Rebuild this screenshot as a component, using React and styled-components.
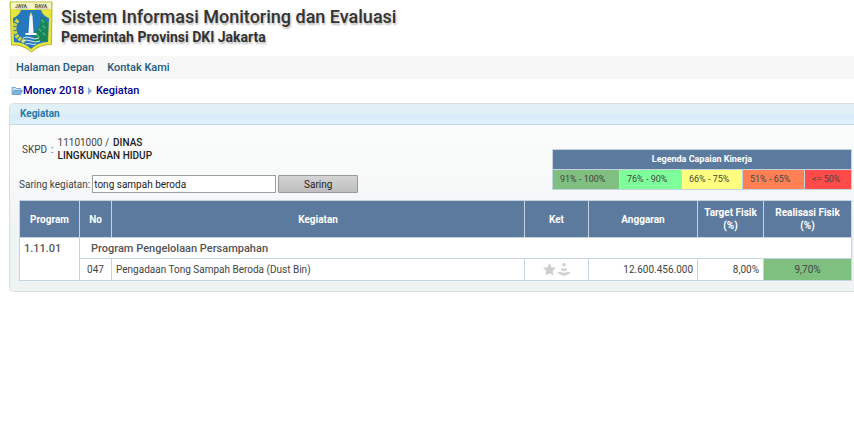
import React, { useState } from "react";
import styled, { createGlobalStyle } from "styled-components";

const legend = [
  { label: "91% - 100%", color: "#7fbf7f", width: 67 },
  { label: "76% - 90%", color: "#7fff99", width: 62 },
  { label: "66% - 75%", color: "#ffff7f", width: 61 },
  { label: "51% - 65%", color: "#ff8055", width: 62 },
  { label: "<= 50%", color: "#ff4a4a", width: 47 },
];

function Logo() {
  return (
    <svg width="44" height="52" viewBox="0 0 44 52" role="img" aria-label="Jaya Raya">
      <path d="M1 1H43L42.500 43.500Q31 43 22.500 51Q13 43 2.500 44Z" fill="#e6e63c" stroke="#b3b62c" />
      <path d="M2 1.500H42V8H2Z" fill="#f3f3d0" />
      <text x="12" y="7" textAnchor="middle" fontSize="5" fontWeight="bold" fill="#5d6038">
        JAYA
      </text>
      <text x="32" y="7" textAnchor="middle" fontSize="5" fontWeight="bold" fill="#5d6038">
        RAYA
      </text>
      <path d="M4 17Q10 15 12 9H32Q34 15 40 17L39 41Q29 41 22 48Q15 41 5 41Z" fill="#2678bd" />
      <path d="M32 15Q39 18 39 28L38 40Q29 40 24 43L26 31Q32 25 32 15Z" fill="#168557" />
      <path d="M9 19Q4 24 6 31Q8 38 17 41" fill="none" stroke="#cfd642" strokeWidth="4" strokeDasharray="3 1" />
      <path d="M33 19l2 3M34 25l2 2M30 28l2 2M34 32l2 2M28 34l2 2" stroke="#6cc5a0" strokeWidth="2" strokeDasharray="1 1" />
      <path d="M20.500 15h3l1 17h3v2h-11v-2h3Z" fill="#f4f6fa" />
      <path d="M20.500 15l1.500-4 1.500 4Z" fill="#e9dfa0" />
      <path d="M14 37q4-2 8 0t8 0M13 40q5-2 9 0t9 0M17 43q3-1 5 0t5 0" fill="none" stroke="#e1edf5" strokeWidth="1" />
    </svg>
  );
}

function FolderIcon() {
  return (
    <svg width="12" height="10" viewBox="0 0 12 10" aria-hidden="true">
      <path d="M1 7.500V1.500h3.500l1 1h4V4" fill="#c6dff2" stroke="#76a9d1" />
      <path d="M3 4.500h8.500L9.500 8.500H1Z" fill="#7fb2da" stroke="#6fa5d0" />
    </svg>
  );
}

function ArrowIcon() {
  return (
    <svg width="4" height="8" viewBox="0 0 4 8" aria-hidden="true">
      <path d="M0 0l4 4-4 4Z" fill="#7db1da" />
    </svg>
  );
}

function StarIcon() {
  return (
    <svg width="13" height="13" viewBox="0 0 13 13" aria-hidden="true">
      <path d="M6.5 0l2 4.2 4.5.6-3.3 3.1.8 4.6-4-2.2-4 2.2.8-4.6L0 4.8l4.5-.6Z" fill="#cfcfcf" />
    </svg>
  );
}

function ConeIcon() {
  return (
    <svg width="14" height="13" viewBox="0 0 14 13" aria-hidden="true">
      <path d="M6 0h2l1 3H5Z M4.5 5q2.5 1.500 5 0l.7 2q-3.200 2-6.400 0Z M3 8.500q4 2.500 8 0l3 1.500-7 3-7-3Z" fill="#cfcfcf" />
    </svg>
  );
}

function App() {
  const [keyword, setKeyword] = useState("tong sampah beroda");

  return (
    <>
      <GlobalStyle />
      <Header>
        <Logo />
        <div>
          <Title>Sistem Informasi Monitoring dan Evaluasi</Title>
          <SubTitle>Pemerintah Provinsi DKI Jakarta</SubTitle>
        </div>
      </Header>
      <Nav>
        <a href="#depan">Halaman Depan</a>
        <a href="#kontak">Kontak Kami</a>
      </Nav>
      <Breadcrumb>
        <a href="#monev">
          <FolderIcon />
          Monev 2018
        </a>
        <ArrowIcon />
        <a href="#kegiatan">Kegiatan</a>
      </Breadcrumb>

      <Panel>
        <PanelTitle>Kegiatan</PanelTitle>
        <PanelBody>
          <Tools>
            <div>
              <Skpd>
                <span>SKPD</span>
                <span>:</span>
                <div>
                  <SkpdLine>
                    <span>11101000 /</span>
                    <b>DINAS</b>
                  </SkpdLine>
                  <SkpdLine>
                    <b>LINGKUNGAN HIDUP</b>
                  </SkpdLine>
                </div>
              </Skpd>
              <Filter onSubmit={(e) => e.preventDefault()}>
                <label htmlFor="keyword">Saring kegiatan:</label>
                <Input
                  id="keyword"
                  value={keyword}
                  onChange={(e) => setKeyword(e.target.value)}
                />
                <Button type="submit">Saring</Button>
              </Filter>
            </div>
            <Legend>
              <colgroup>
                {legend.map((item) => (
                  <Col key={item.label} $width={item.width} />
                ))}
              </colgroup>
              <thead>
                <tr>
                  <th colSpan={5}>Legenda Capaian Kinerja</th>
                </tr>
              </thead>
              <tbody>
                <tr>
                  {legend.map((item) => (
                    <LegendCell key={item.label} $color={item.color}>
                      {item.label}
                    </LegendCell>
                  ))}
                </tr>
              </tbody>
            </Legend>
          </Tools>

          <Table>
            <colgroup>
              <Col $width={60} />
              <Col $width={32} />
              <Col />
              <Col $width={64} />
              <Col $width={109} />
              <Col $width={66} />
              <Col $width={88} />
            </colgroup>
            <thead>
              <tr>
                <th>Program</th>
                <th>No</th>
                <th>Kegiatan</th>
                <th>Ket</th>
                <th>Anggaran</th>
                <th>Target Fisik (%)</th>
                <th>Realisasi Fisik (%)</th>
              </tr>
            </thead>
            <tbody>
              <tr>
                <ProgramCell rowSpan={2}>1.11.01</ProgramCell>
                <ProgramName colSpan={6}>Program Pengelolaan Persampahan</ProgramName>
              </tr>
              <tr>
                <Cell $align="center">047</Cell>
                <Cell>Pengadaan Tong Sampah Beroda (Dust Bin)</Cell>
                <Cell>
                  <Icons>
                    <StarIcon />
                    <ConeIcon />
                  </Icons>
                </Cell>
                <Cell $align="right">12.600.456.000</Cell>
                <Cell $align="right">8,00%</Cell>
                <Cell $align="center" $color="#7fbf7f">
                  9,70%
                </Cell>
              </tr>
            </tbody>
          </Table>
        </PanelBody>
      </Panel>
    </>
  );
}

const GlobalStyle = createGlobalStyle`
  * {
    box-sizing: border-box;
  }

  body {
    margin: 0 0 0 9px;
    background: #fff;
    color: #444;
    font-family: Roboto, "Liberation Sans", sans-serif;
    font-size: 10px;
    line-height: 13px;
  }

  a {
    text-decoration: none;
  }

  svg {
    display: block;
    flex: none;
  }
`;

const Header = styled.header`
  display: flex;
  gap: 8px;
  height: 56px;
  padding-top: 1px;
  color: #333;
  text-shadow: 1px 2px 2px #bbb;
`;

const Title = styled.h1`
  margin: 5px 0 0;
  font-size: 18px;
  line-height: 22px;
  font-weight: 500;
`;

const SubTitle = styled.h2`
  margin: 0;
  font-size: 14px;
  line-height: 18px;
  font-weight: 700;
`;

const Nav = styled.nav`
  display: flex;
  align-items: center;
  gap: 13px;
  height: 23px;
  padding-left: 7px;
  background: #f7f7f7;
  font-size: 11px;

  a {
    color: #215b80;
    font-weight: 500;
  }
`;

const Breadcrumb = styled.div`
  display: flex;
  align-items: center;
  gap: 4px;
  height: 24px;
  padding: 0 0 1px 2px;
  font-size: 11px;

  a {
    display: flex;
    align-items: center;
    color: #00008b;
    font-weight: 500;
  }
`;

const Panel = styled.section`
  border: 1px solid #d9dddd;
  border-right: 0;
  border-radius: 5px 0 0 5px;
  overflow: hidden;
`;

const PanelTitle = styled.h3`
  margin: 0;
  padding: 3px 10px;
  border-bottom: 1px solid #c3dcea;
  background: linear-gradient(#e1f0f7 50%, #d5ebf8 50%, #dff1fa);
  color: #2779aa;
  font-size: 10px;
  line-height: 14px;
  font-weight: 700;
`;

const PanelBody = styled.div`
  padding: 11px 2px 10px 9px;
  background: linear-gradient(#fafbfb, #f8fafa 30%, #f0f3f4 60%);
`;

const Tools = styled.div`
  display: flex;
  justify-content: space-between;
  margin-bottom: 7px;
`;

const Skpd = styled.div`
  display: flex;
  align-items: center;
  gap: 4px;
  padding-left: 3px;
`;

const SkpdLine = styled.div`
  display: flex;
  gap: 4px;

  b {
    color: #222;
    font-weight: 500;
  }
`;

const Filter = styled.form`
  display: flex;
  align-items: center;
  margin-top: 13px;
  gap: 2px;
`;

const Input = styled.input`
  width: 184px;
  height: 18px;
  padding: 0 1px;
  border: 1px solid #999fa5;
  background: #fff;
  color: #222;
  font: inherit;
`;

const Button = styled.button`
  width: 80px;
  height: 18px;
  padding: 0;
  border: 1px solid #999;
  border-radius: 1px;
  background: linear-gradient(#d4d4d4, #bfbfbf);
  color: #222;
  font: inherit;
`;

const Legend = styled.table`
  align-self: flex-end;
  width: 299px;
  margin-bottom: 3px;
  border-collapse: collapse;
  table-layout: fixed;
  font-size: 9px;

  th {
    height: 20px;
    padding: 0;
    border: 1px solid #c5d5df;
    background: #5c7a9d;
    color: #fff;
    font-weight: 700;
  }
`;

const LegendCell = styled.td`
  height: 20px;
  padding: 0 7px;
  border: 1px solid #c5d5df;
  background: ${({ $color }) => $color};
  white-space: nowrap;
`;

const Table = styled.table`
  width: 100%;
  border-collapse: collapse;
  table-layout: fixed;
  background: #fff;

  th {
    height: 37px;
    padding: 0 4px;
    border: 1px solid #c5d5df;
    background: #5c7a9d;
    color: #fff;
    font-weight: 700;
  }
`;

const Col = styled.col`
  width: ${({ $width }) => ($width ? `${$width}px` : "auto")};
`;

const Cell = styled.td`
  height: 22px;
  padding: 0 4px;
  border: 1px solid #c5d5df;
  background: ${({ $color }) => $color || "#fff"};
  text-align: ${({ $align }) => $align || "left"};
`;

const ProgramCell = styled(Cell)`
  padding-top: 4px;
  color: #555;
  font-size: 11px;
  font-weight: 500;
  vertical-align: top;
`;

const ProgramName = styled(Cell)`
  height: 21px;
  padding-left: 11px;
  color: #555;
  font-size: 11px;
  font-weight: 500;
`;

const Icons = styled.div`
  display: flex;
  justify-content: center;
  gap: 1px;
`;

export default App;
